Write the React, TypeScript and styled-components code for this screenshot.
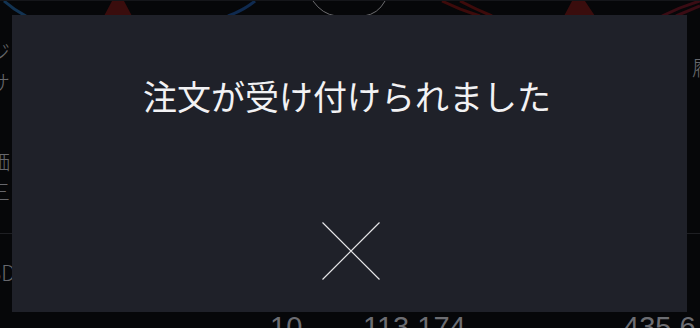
import React from "react";
import styled, { createGlobalStyle } from "styled-components";

const Global = createGlobalStyle`
  html, body { margin: 0; padding: 0; background: #060709; }
  body { width: 700px; height: 328px; overflow: hidden; font-family: "Noto Sans CJK JP", "Noto Sans", sans-serif; }
`;

const Screen = styled.div`
  position: relative;
  width: 700px;
  height: 328px;
  overflow: hidden;
  background: #060709;
  display: flex;
  flex-direction: column;
`;

const TopStrip = styled.div`
  height: 15px;
  border-top: 1px solid #15161a;
  flex: none;
`;

const Body = styled.div`
  flex: 1;
  display: flex;
  flex-direction: column;
`;

const Row = styled.div<{ $h: number; $line?: boolean }>`
  height: ${(p) => p.$h}px;
  flex: none;
  display: flex;
  justify-content: space-between;
  align-items: center;
  border-bottom: ${(p) => (p.$line ? "1px solid #1e1f23" : "none")};
  color: #66676c;
  font-size: 21px;
  font-weight: 300;
`;

const EdgeText = styled.span<{ $side: "left" | "right" }>`
  display: block;
  line-height: 28px;
  white-space: nowrap;
  ${(p) => (p.$side === "left" ? "margin-left: -11px;" : "margin-right: -13px;")}
`;

const Stack = styled.div`
  display: flex;
  flex-direction: column;
  gap: 2px;
`;

const NumberRow = styled.div`
  height: 20px;
  color: #6c6d72;
  font-family: "Liberation Sans", Arial, sans-serif;
  font-size: 29px;
  line-height: 32px;
  display: grid;
  grid-template-columns: 270px 93px 260px 77px;
  align-items: start;
`;

const Num = styled.span`
  display: block;
  white-space: nowrap;
  margin-top: 2px;
`;

const Modal = styled.div`
  position: absolute;
  left: 12px;
  top: 15px;
  width: 675px;
  height: 297px;
  background: #1f2129;
  box-sizing: border-box;
  padding: 61px 0 32px;
  display: flex;
  flex-direction: column;
  align-items: center;
  justify-content: space-between;
`;

const Message = styled.div`
  color: #f2f2f4;
  font-family: "Noto Sans CJK JP", sans-serif;
  font-size: 34px;
  line-height: 40px;
  font-weight: 400;
  margin-left: -5px;
`;

const CloseButton = styled.button`
  width: 58px;
  height: 58px;
  padding: 0;
  border: none;
  background: transparent;
  display: flex;
  margin-left: 2px;
`;

const Arcs = () => (
  <svg width="700" height="15" viewBox="0 0 700 15" style={{ display: "block" }}>
    <path d="M4 0 Q14 9 26 15" stroke="#123352" strokeWidth="3" fill="none" />
    <polygon points="112,0 124,0 132,15 104,15" fill="#3a0d0d" />
    <path d="M255 0 Q244 9 228 15" stroke="#0f2a4f" strokeWidth="3" fill="none" />
    <path d="M313 0 Q322 13 336 15" stroke="#6d6d70" strokeWidth="1" fill="none" />
    <path d="M385 0 Q378 13 364 15" stroke="#6d6d70" strokeWidth="1" fill="none" />
    <path d="M442 0 Q460 9 480 15" stroke="#3d0b0b" strokeWidth="3" fill="none" />
    <path d="M460 0 Q475 8 492 15" stroke="#3d0b0b" strokeWidth="3" fill="none" />
    <polygon points="572,0 585,0 595,15 564,15" fill="#3a0d0d" />
    <path d="M700 0 Q680 6 662 15" stroke="#3a0c14" strokeWidth="3" fill="none" />
    <path d="M700 5 Q688 10 676 15" stroke="#3a0c14" strokeWidth="3" fill="none" />
  </svg>
);

export default function App() {
  return (
    <>
      <Global />
      <Screen>
        <TopStrip>
          <Arcs />
        </TopStrip>
        <Body>
          <Row $h={100}>
            <Stack>
              <EdgeText $side="left">ジ</EdgeText>
              <EdgeText $side="left">サ</EdgeText>
            </Stack>
            <EdgeText $side="right">履</EdgeText>
          </Row>
          <Row $h={117} $line>
            <Stack>
              <EdgeText $side="left">価</EdgeText>
              <EdgeText $side="left">三</EdgeText>
            </Stack>
            <EdgeText $side="right">C</EdgeText>
          </Row>
          <Row $h={75}>
            <EdgeText $side="left">SD</EdgeText>
            <EdgeText $side="right">4</EdgeText>
          </Row>
          <NumberRow>
            <span />
            <Num>10</Num>
            <Num>113,174</Num>
            <Num>435.6</Num>
          </NumberRow>
        </Body>
        <Modal>
          <Message>注文が受け付けられました</Message>
          <CloseButton aria-label="閉じる">
            <svg width="58" height="58" viewBox="0 0 58 58">
              <path d="M0.5 0.5 L57.5 57.5 M57.5 0.5 L0.5 57.5" stroke="#e6e6e8" strokeWidth="1.2" fill="none" />
            </svg>
          </CloseButton>
        </Modal>
      </Screen>
    </>
  );
}
